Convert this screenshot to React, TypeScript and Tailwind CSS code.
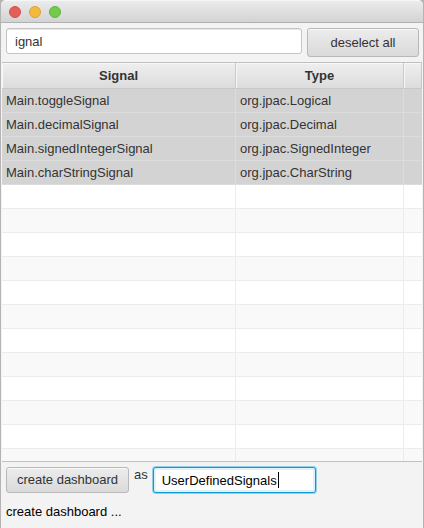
import { useState } from "react";

type Signal = { name: string; type: string };

const signals: Signal[] = [
  { name: "Main.toggleSignal", type: "org.jpac.Logical" },
  { name: "Main.decimalSignal", type: "org.jpac.Decimal" },
  { name: "Main.signedIntegerSignal", type: "org.jpac.SignedInteger" },
  { name: "Main.charStringSignal", type: "org.jpac.CharString" },
];

const emptyRows = Array.from({ length: 40 }, (_, i) => i);

function TitleBar() {
  return (
    <header className="flex h-[23px] shrink-0 items-center gap-2 rounded-t-[5px] border-t border-b border-t-[#f6f6f6] border-b-[#b1b1b1] bg-linear-to-b from-[#ebebeb] to-[#d3d3d3] px-2 pt-px">
      <button aria-label="Close" className="size-3 rounded-full border border-[#d2504a] bg-[#e35f58]" />
      <button aria-label="Minimize" className="size-3 rounded-full border border-[#dba136] bg-[#f2bb40]" />
      <button aria-label="Zoom" className="size-3 rounded-full border border-[#62b143] bg-[#74cb4b]" />
    </header>
  );
}

function SignalTable() {
  const head =
    "h-[26px] border-r border-b border-[#c8c8c8] bg-linear-to-b from-[#efefef] to-[#dcdcdc] p-0 text-center font-bold shadow-[inset_1px_1px_0_#f8f8f8]";
  return (
    <div className="min-h-0 flex-1 overflow-hidden border-t border-b border-[#c0c0c0] bg-white">
      <table className="w-full table-fixed border-separate border-spacing-0">
        <colgroup>
          <col />
          <col className="w-[168px]" />
          <col className="w-[18px]" />
        </colgroup>
        <thead>
          <tr>
            <th scope="col" className={head}>Signal</th>
            <th scope="col" className={head}>Type</th>
            <td className={head} />
          </tr>
        </thead>
        <tbody>
          {signals.map((s) => (
            <tr key={s.name} className="bg-[#d3d3d3]">
              <td className="h-6 border-r border-b border-[#dcdcdc] p-0 pl-1">{s.name}</td>
              <td className="h-6 border-r border-b border-[#dcdcdc] p-0 pl-1">{s.type}</td>
              <td className="h-6 border-b border-[#dcdcdc] p-0" />
            </tr>
          ))}
          {emptyRows.map((i) => (
            <tr key={i} className="bg-white even:bg-[#f9f9f9]">
              <td className="h-6 border-r border-b border-[#ececec] p-0" />
              <td className="h-6 border-r border-b border-[#ececec] p-0" />
              <td className="h-6 border-b border-[#ececec] p-0" />
            </tr>
          ))}
        </tbody>
      </table>
    </div>
  );
}

export default function App() {
  const [filter, setFilter] = useState("ignal");
  const [name, setName] = useState("UserDefinedSignals");
  const button =
    "rounded-[3px] border border-[#b8b8b8] bg-linear-to-b from-[#ececec] to-[#dadada] text-[#333333] shadow-[inset_0_1px_0_#fafafa]";

  return (
    <div className="h-screen bg-[#b4b4b4] px-px font-['Liberation_Sans',Arial,sans-serif] text-[13px] leading-4 text-[#333333]">
      <main className="flex h-full flex-col overflow-hidden rounded-t-[5px] bg-[#f3f3f3]">
        <TitleBar />
        <div className="flex shrink-0 items-start gap-[5px] py-[5px] pr-1 pl-[5px]">
          <input
            aria-label="Filter signals"
            value={filter}
            onChange={(e) => setFilter(e.target.value)}
            className="h-[26px] min-w-0 flex-1 rounded-[3px] border border-[#c4c4c4] bg-white px-2 shadow-[inset_0_1px_0_#e8e8e8] outline-none"
          />
          <button className={`${button} h-[29px] w-28 shrink-0`}>deselect all</button>
        </div>
        <div className="flex min-h-0 flex-1 flex-col px-px">
          <SignalTable />
        </div>
        <footer className="shrink-0 px-[5px] pt-[5px] pb-2">
          <div className="flex items-start gap-[5px]">
            <button className={`${button} h-[26px] w-[123px]`}>create dashboard</button>
            <label htmlFor="dashboard-name">as</label>
            <div className="relative">
              <input
                id="dashboard-name"
                value={name}
                onChange={(e) => setName(e.target.value)}
                className="block h-[26px] w-[163px] rounded-[3px] border border-[#0d9bd3] bg-white px-2 text-black shadow-[0_0_0_1px_#8fcfe9,inset_0_0_0_2px_#dff1fa] outline-none"
              />
              <span className="absolute top-[5px] left-[125px] h-4 w-px bg-black" />
            </div>
          </div>
          <p className="mt-[11px] text-black">create dashboard ...</p>
        </footer>
      </main>
    </div>
  );
}
